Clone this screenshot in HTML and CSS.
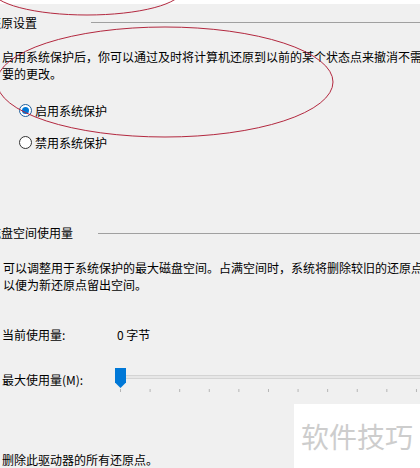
FILE: index.html
```html
<!DOCTYPE html>
<html lang="zh-CN">
<head>
    <meta charset="UTF-8">
    <meta name="viewport" content="width=device-width, initial-scale=1.0">
    <title>系统保护</title>
    <link rel="stylesheet" href="styles.css">
</head>
<body>
    <div class="top-strip"></div>
    <div class="panel">
        <div class="group-title group-title-first">
            <span>还原设置</span>
            <span class="group-line"></span>
        </div>
        <p class="desc desc-first">启用系统保护后，你可以通过及时将计算机还原到以前的某个状态点来撤消不需要的更改。</p>
        <label class="radio-row radio-first">
            <span class="radio checked"></span>
            <span>启用系统保护</span>
        </label>
        <label class="radio-row radio-second">
            <span class="radio"></span>
            <span>禁用系统保护</span>
        </label>

        <div class="group-title group-title-second">
            <span>磁盘空间使用量</span>
            <span class="group-line"></span>
        </div>
        <p class="desc desc-second">可以调整用于系统保护的最大磁盘空间。占满空间时，系统将删除较旧的还原点以便为新还原点留出空间。</p>
        <div class="usage-row">
            <span class="usage-label">当前使用量:</span>
            <span>0 字节</span>
        </div>
        <div class="slider-row">
            <span class="usage-label slider-label">最大使用量(M):</span>
            <div class="slider">
                <div class="slider-track"></div>
                <div class="slider-ticks"></div>
                <div class="slider-thumb"></div>
            </div>
        </div>
        <p class="delete-text">删除此驱动器的所有还原点。</p>
    </div>

    <div class="watermark">软件技巧</div>

    <svg class="marks" width="420" height="468" viewBox="0 0 420 468">
        <ellipse cx="87" cy="-10" rx="95" ry="25" />
        <ellipse cx="165" cy="82" rx="168" ry="55" />
    </svg>
</body>
</html>
```

FILE: styles.css
```css
body {
    margin: 0;
    width: 420px;
    height: 468px;
    overflow: hidden;
    position: relative;
    background-color: #f0f0f0;
    color: #000;
    font-family: "Noto Sans CJK SC", "Liberation Sans", sans-serif;
    font-size: 12px;
    line-height: 17px;
}
.top-strip {
    height: 4px;
    background-color: #fff;
}
.panel {
    width: 422px;
    padding-left: 2px;
}
.group-title {
    display: flex;
    align-items: center;
    margin-left: -13px;
    white-space: nowrap;
}
.group-title-first {
    margin-top: 10px;
}
.group-title-second {
    margin-top: 73px;
}
.group-line {
    flex: 1;
    height: 1px;
    background-color: #a0a0a0;
}
.group-title-first .group-line {
    margin-left: 54px;
    margin-top: -1px;
}
.group-title-second .group-line {
    margin-left: 25px;
    margin-top: 2px;
}
.desc {
    margin: 0;
}
.desc-first {
    margin-top: 17px;
}
.desc-second {
    margin-top: 18px;
    padding-left: 1px;
}
.radio-row {
    display: flex;
    align-items: center;
    gap: 3px;
    padding-left: 17px;
}
.radio-first {
    margin-top: 20px;
}
.radio-second {
    margin-top: 15px;
}
.radio {
    box-sizing: border-box;
    width: 13px;
    height: 13px;
    border: 1px solid #333;
    border-radius: 50%;
    background-color: #fff;
    display: flex;
    align-items: center;
    justify-content: center;
}
.radio.checked {
    border-color: #1f5f9c;
}
.radio.checked::after {
    content: "";
    width: 7px;
    height: 7px;
    border-radius: 50%;
    background-color: #0078d7;
}
.usage-row {
    display: flex;
    margin-top: 33px;
}
.usage-label {
    width: 115px;
    flex-shrink: 0;
}
.slider-row {
    display: flex;
    align-items: flex-start;
    height: 28px;
    margin-top: 23px;
}
.slider-label {
    width: 113px;
    margin-top: 5px;
}
.slider {
    flex: 1;
    position: relative;
    height: 28px;
}
.slider-track {
    box-sizing: border-box;
    height: 4px;
    margin-top: 9px;
    border-top: 1px solid #d4d4d4;
    border-bottom: 1px solid #d4d4d4;
    background-color: #e7e7e7;
}
.slider-ticks {
    height: 3px;
    margin-top: 10px;
    margin-left: 5px;
    background-image: linear-gradient(to right, #b4b4b4 1px, transparent 1px);
    background-size: 29.6px 3px;
    background-repeat: repeat-x;
}
.slider-thumb {
    position: absolute;
    left: 0;
    top: 2px;
    width: 11px;
    height: 20px;
    background-color: #0078d7;
    clip-path: polygon(0 0, 100% 0, 100% 72%, 50% 100%, 0 72%);
}
.delete-text {
    margin: 57px 0 0;
}
.watermark {
    position: absolute;
    left: 294px;
    top: 404px;
    width: 126px;
    height: 64px;
    box-sizing: border-box;
    padding: 14px 0 0 7px;
    background-color: #fff;
    color: #cdcdcd;
    font-size: 28px;
    line-height: 36px;
    white-space: nowrap;
}
.marks {
    position: absolute;
    left: 0;
    top: 0;
    pointer-events: none;
}
.marks ellipse {
    fill: none;
    stroke: #b3283f;
    stroke-width: 1;
}
```
